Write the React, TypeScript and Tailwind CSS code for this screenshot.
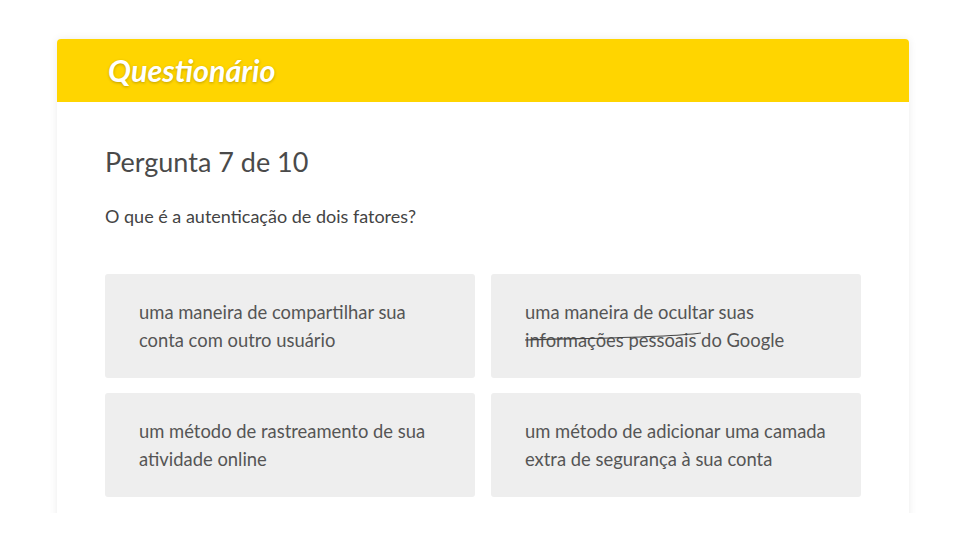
const options = [
  { text: "uma maneira de compartilhar sua conta com outro usuário" },
  { text: "uma maneira de ocultar suas informações pessoais do Google", struck: true },
  { text: "um método de rastreamento de sua atividade online" },
  { text: "um método de adicionar uma camada extra de segurança à sua conta" },
];

function Option({ text, struck }: { text: string; struck?: boolean }) {
  return (
    <div className="relative h-[104px] rounded-[3px] bg-[#eeeeee] pl-[34px] pr-[20px] pt-[24px] text-[18.4px] leading-[28px] text-[#555555]">
      {text}
      {struck && (
        <svg
          className="pointer-events-none absolute left-[32px] top-[53px]"
          width="184"
          height="20"
          viewBox="0 0 184 20"
          fill="none"
        >
          <path d="M2 13 C 70 11, 140 11, 178 6" stroke="#444444" strokeWidth="1.2" />
        </svg>
      )}
    </div>
  );
}

export default function App() {
  return (
    <div className="h-[540px] w-[960px] bg-white font-['Lato',sans-serif]">
      <div className="h-[513px] overflow-hidden pt-[39px] pl-[57px]">
        <div className="h-[500px] w-[852px] rounded-t-[4px] bg-white shadow-[0_0_8px_rgba(0,0,0,0.08)]">
          <div className="flex h-[63px] items-center rounded-t-[4px] bg-[#ffd500] pl-[51px]">
            <h1 className="text-[30.5px] font-bold italic text-white [text-shadow:0_1px_3px_rgba(0,0,0,0.25)]">
              Questionário
            </h1>
          </div>
          <div className="px-[48px] pt-[42px]">
            <h2 className="text-[27px] leading-[36px] text-[#4a4a4a]">Pergunta 7 de 10</h2>
            <p className="mt-[24px] text-[18px] leading-[24px] text-[#444444]">
              O que é a autenticação de dois fatores?
            </p>
            <div className="mt-[46px] grid grid-cols-2 gap-x-[16px] gap-y-[15px]">
              {options.map((o) => (
                <Option key={o.text} text={o.text} struck={o.struck} />
              ))}
            </div>
          </div>
        </div>
      </div>
    </div>
  );
}
